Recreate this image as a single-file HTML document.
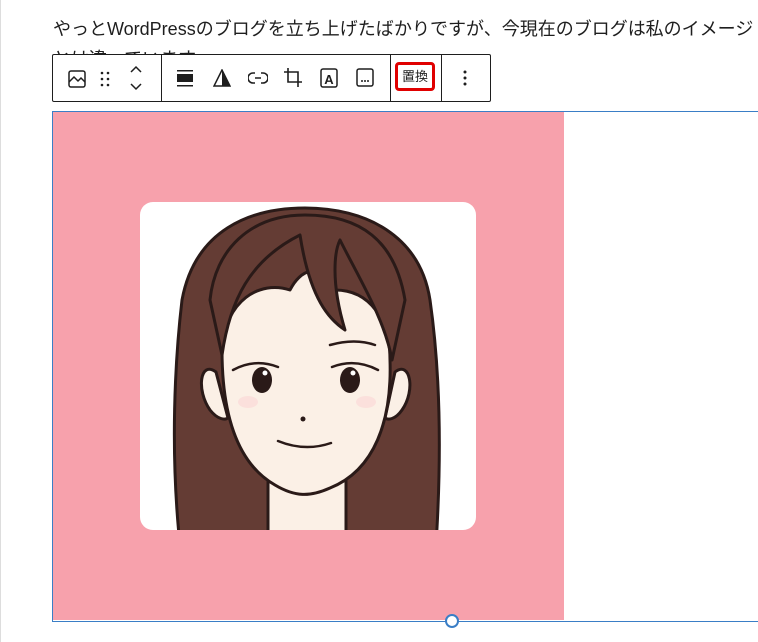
<!DOCTYPE html>
<html><head><meta charset="utf-8"><style>
body{margin:0;width:758px;height:642px;background:#fff;position:relative;overflow:hidden;font-family:"Liberation Sans","Noto Sans CJK JP",sans-serif;}
.t{position:absolute;left:53px;font-size:18px;color:#1e1e1e;white-space:nowrap;}
.tb{position:absolute;left:52px;top:54px;width:437px;height:46px;border:1px solid #1e1e1e;background:#fff;border-radius:2px;}
.dv{position:absolute;top:0;width:1px;height:46px;background:#1e1e1e;}
.ic{position:absolute;top:12px;}
.img{position:absolute;left:52px;top:111px;width:706px;height:509px;border:1px solid #3a7ec6;border-right:none;}
.pink{position:absolute;left:53px;top:112px;width:511px;height:508px;background:#f7a1ac;}
</style></head><body>
<div style="position:absolute;left:0;top:0;width:1px;height:642px;background:#ddd"></div>
<div class="t" style="top:15px">やっとWordPressのブログを立ち上げたばかりですが、今現在のブログは私のイメージ</div>
<div class="t" style="top:45px;clip-path:inset(0 0 10px 0)">とは違っています。</div>
<div class="img"></div>
<div class="pink"></div>
<svg style="position:absolute;left:0;top:0" width="758" height="642">
<rect x="140" y="202" width="336" height="328" rx="13" fill="#fff"/>
<clipPath id="c"><rect x="140" y="202" width="336" height="328" rx="13"/></clipPath>
<g clip-path="url(#c)" stroke="#2a1a18" stroke-width="3" stroke-linejoin="round">
<path d="M180 545 C170 450 175 360 182 300 C195 230 250 208 305 208 C365 208 420 235 430 300 C440 370 442 450 436 545 Z" fill="#643c34"/>
<rect x="268" y="455" width="78" height="90" fill="#fbf0e6"/>
<path d="M216 372 C200 360 196 390 210 410 C218 420 225 420 228 418 Z M395 372 C410 360 416 390 402 410 C395 420 388 420 385 418 Z" fill="#fbf0e6"/>
<path d="M222 350 C225 300 260 280 290 290 C300 270 320 260 335 290 C370 290 390 320 390 360 C392 420 375 470 330 488 C310 497 295 497 275 485 C240 465 222 420 222 350 Z" fill="#fbf0e6"/>
<path d="M222 355 C230 300 250 260 300 235 C310 300 330 320 345 330 C330 280 335 250 340 240 C360 280 385 320 392 360 L405 300 C395 240 360 215 305 215 C250 215 215 250 210 300 Z" fill="#643c34"/>
</g>
<g fill="#2a1a18">
<ellipse cx="262" cy="380" rx="10" ry="13"/><ellipse cx="350" cy="380" rx="10" ry="13"/>
<circle cx="303" cy="419" r="2.5"/>
</g>
<circle cx="265" cy="373" r="2.5" fill="#fff"/><circle cx="353" cy="373" r="2.5" fill="#fff"/>
<ellipse cx="248" cy="402" rx="10" ry="6" fill="#fbe0dc"/><ellipse cx="366" cy="402" rx="10" ry="6" fill="#fbe0dc"/>
<g fill="none" stroke="#2a1a18" stroke-width="2.5" stroke-linecap="round">
<path d="M278 441 Q305 452 331 443"/>
<path d="M233 370 Q255 358 278 367"/><path d="M332 367 Q355 358 378 370"/>
<path d="M330 345 Q355 338 375 345"/>
</g>
<circle cx="452" cy="621" r="6" fill="#fff" stroke="#3a7ec6" stroke-width="2"/>
</svg>
<div class="tb">
<div class="dv" style="left:108px"></div><div class="dv" style="left:337px"></div><div class="dv" style="left:388px"></div>
<svg class="ic" style="left:14px;top:14px" width="20" height="20" viewBox="0 0 20 20" fill="none" stroke="#1e1e1e" stroke-width="1.5"><rect x="2" y="2" width="16" height="16" rx="2"/><path d="M2 13 L7 8 L11 12 L14 9 L18 13"/></svg>
<svg class="ic" style="left:46px;top:15px" width="12" height="18"><g fill="#1e1e1e"><circle cx="3" cy="3" r="1.3"/><circle cx="9" cy="3" r="1.3"/><circle cx="3" cy="9" r="1.3"/><circle cx="9" cy="9" r="1.3"/><circle cx="3" cy="15" r="1.3"/><circle cx="9" cy="15" r="1.3"/></g></svg>
<svg class="ic" style="left:76px;top:9px" width="14" height="28" fill="none" stroke="#1e1e1e" stroke-width="1.5"><path d="M2 8 L7 3 L12 8 M2 20 L7 25 L12 20"/></svg>
<svg class="ic" style="left:124px;top:15px" width="16" height="17"><rect x="0" y="0" width="16" height="1.5" fill="#1e1e1e"/><rect x="0" y="4" width="16" height="8" fill="#1e1e1e"/><rect x="0" y="15" width="16" height="1.5" fill="#1e1e1e"/></svg>
<svg class="ic" style="left:160px;top:14px" width="18" height="18"><path d="M9 1 L1 17 H17 Z" fill="none" stroke="#1e1e1e" stroke-width="1.5"/><path d="M9 1 L17 17 H9 Z" fill="#1e1e1e"/></svg>
<svg class="ic" style="left:195px;top:16px" width="20" height="14" fill="none" stroke="#1e1e1e" stroke-width="1.6"><path d="M7 2 H5 A5 5 0 0 0 5 12 H7 M13 2 H15 A5 5 0 0 1 15 12 H13 M7 7 H13"/></svg>
<svg class="ic" style="left:231px;top:13px" width="18" height="19" fill="none" stroke="#1e1e1e" stroke-width="1.6"><path d="M4 0 V14 H18 M0 4 H14 V19"/></svg>
<svg class="ic" style="left:267px;top:13px" width="18" height="20"><rect x="1" y="1" width="16" height="18" rx="2" fill="none" stroke="#1e1e1e" stroke-width="1.5"/><text x="9" y="16" font-size="13" font-weight="bold" text-anchor="middle" font-family="Liberation Sans" fill="#1e1e1e">A</text></svg>
<svg class="ic" style="left:303px;top:13px" width="18" height="19"><rect x="1" y="1" width="16" height="17" rx="2" fill="none" stroke="#1e1e1e" stroke-width="1.5"/><g fill="#1e1e1e"><circle cx="6" cy="13" r="1"/><circle cx="9" cy="13" r="1"/><circle cx="12" cy="13" r="1"/></g></svg>
<div style="position:absolute;left:342px;top:7px;width:40px;height:29px;border:3px solid #e00000;border-radius:4px;box-sizing:border-box;font-size:13px;line-height:23px;text-align:center;color:#1e1e1e">置換</div>
<svg class="ic" style="left:409px;top:14px" width="6" height="18"><g fill="#1e1e1e"><circle cx="3" cy="3" r="1.5"/><circle cx="3" cy="9" r="1.5"/><circle cx="3" cy="15" r="1.5"/></g></svg>
</div>
</body></html>
